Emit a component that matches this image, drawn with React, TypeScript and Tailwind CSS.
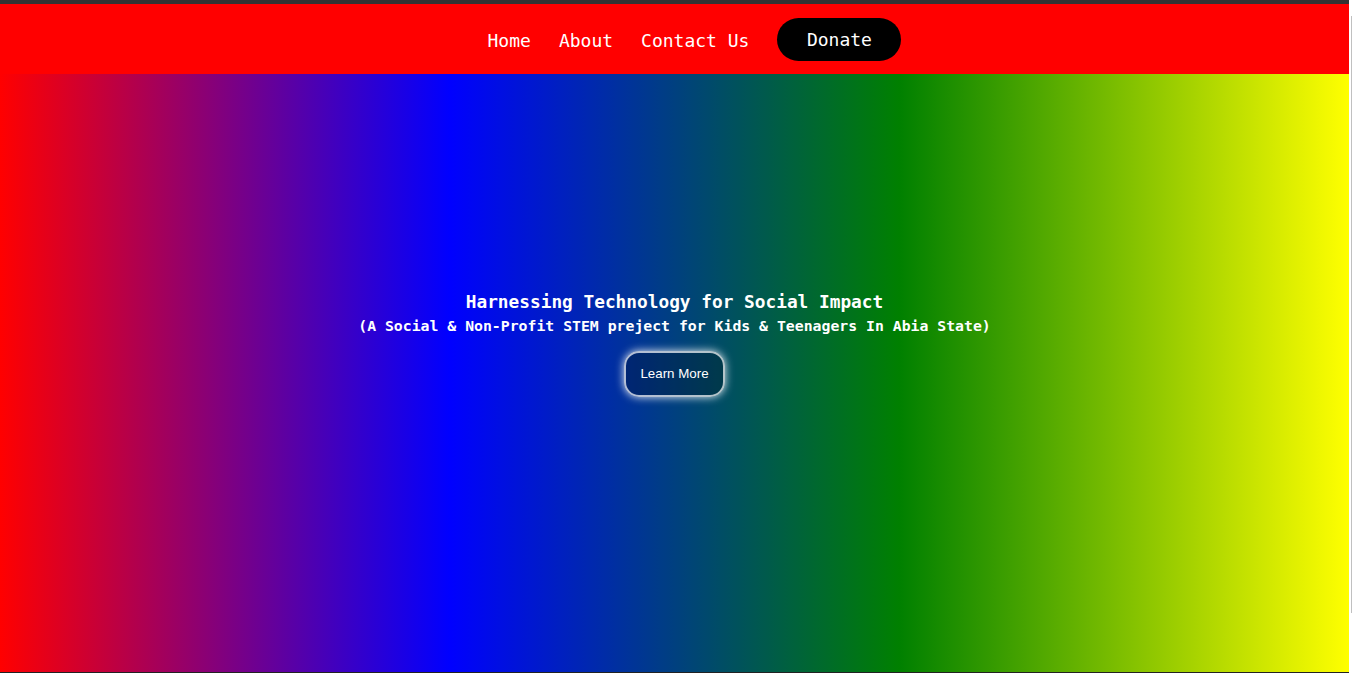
import React from 'react';

const navLinks = ['Home', 'About', 'Contact Us'];

export default function App() {
  return (
    <div className="flex h-[673px] w-[1352px] overflow-hidden bg-white">
      <div className="flex w-[1349px] flex-col">
        {/* window top edge */}
        <div className="h-[4px] bg-[#333333]" />

        {/* Navbar */}
        <nav
          className="flex h-[70px] items-center justify-center gap-[28px] bg-[#ff0000] pl-10 text-[18px] text-white"
          style={{ fontFamily: '"DejaVu Sans Mono", monospace' }}
        >
          {navLinks.map((link) => (
            <a key={link} href="#" className="pt-[2px]">
              {link}
            </a>
          ))}
          <button className="flex h-[43px] w-[124px] items-center justify-center rounded-full bg-black pt-[1px] text-[18px] text-white">
            Donate
          </button>
        </nav>

        {/* Hero */}
        <section className="flex flex-1 flex-col items-center bg-[linear-gradient(to_right,red,blue,green,yellow)] pt-[217px] text-white">
          <h1
            className="text-[17.8px] leading-[22px] font-bold"
            style={{ fontFamily: '"DejaVu Sans Mono", monospace' }}
          >
            Harnessing Technology for Social Impact
          </h1>
          <p
            className="mt-[4px] text-[14.8px] leading-[18px] font-bold"
            style={{ fontFamily: '"DejaVu Sans Mono", monospace' }}
          >
            (A Social &amp; Non-Profit STEM preject for Kids &amp; Teenagers In Abia State)
          </p>
          <button
            className="mt-[16px] flex h-[46px] w-[101px] items-center justify-center rounded-[15px] border-2 border-white/70 bg-black/25 text-[13.33px] text-white shadow-[0_0_8px_rgba(255,255,255,0.9)]"
            style={{ fontFamily: '"Liberation Sans", Arial, sans-serif' }}
          >
            Learn More
          </button>
        </section>

        <div className="h-[1px] bg-[#222222]" />
      </div>

      {/* scrollbar edge */}
      <div className="flex w-[3px] justify-end bg-white pt-[16px] pb-[60px]">
        <div className="w-[1px] bg-[#c0c0c0]" />
      </div>
    </div>
  );
}
